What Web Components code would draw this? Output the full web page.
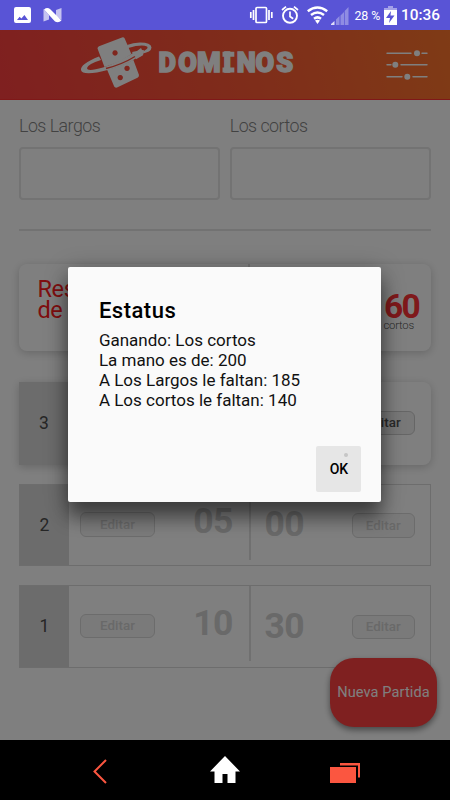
<!DOCTYPE html>
<html lang="es">
<head>
<meta charset="utf-8">
<title>Dominos</title>
<style>
html,body{margin:0;height:100%;overflow:hidden;background:#000}
body{font-family:Roboto,"Liberation Sans",sans-serif}
</style>
</head>
<body>
<dominos-app></dominos-app>
<script>
function define(name, html) {
  customElements.define(name, class extends HTMLElement {
    constructor() {
      super();
      const t = document.createElement('template');
      t.innerHTML = html;
      this.attachShadow({mode: 'open'}).appendChild(t.content.cloneNode(true));
    }
  });
}

define('status-bar', `<style>
:host{display:flex;height:30px;background:#5954d6;color:#fff;box-sizing:border-box;padding:0 10px 0 14px;align-items:center;justify-content:space-between}
div{display:flex;align-items:center}
svg{display:block}
.pct{font-size:12.400px;width:29.500px;margin-left:5px;white-space:nowrap;letter-spacing:-.1px}
.time{font-size:15.400px;font-weight:500;margin-left:4px;white-space:nowrap;line-height:30px}
</style>
<div>
<svg width="50" height="30" viewBox="0 0 50 30"><path fill="#fff" fill-rule="evenodd" d="M2 7h13q2 0 2 2v12q0 2-2 2H2q-2 0-2-2V9q0-2 2-2zM3 20h11l-3.600-5-3 3.600-1.800-1.800z"/><path fill="#fff" opacity=".65" d="M29.500 9v12.500l5.500-2V15zM47.500 8v12l-5.500-4V10z"/><path fill="#fff" d="M30 9.500Q33 7 36 9l11.500 11.500Q44.500 23.500 41 21.500z"/></svg>
</div>
<div>
<svg width="100" height="30" viewBox="249 0 100 30"><g fill="none" stroke="#fff" stroke-width="1.700"><rect x="256" y="7.500" width="10.500" height="15" rx="1"/><path d="M253.500 10v10M250.800 12v6M269 10v10M271.800 12v6"/><circle cx="290" cy="15.800" r="7" stroke-width="1.900"/><path d="M290 11.500v5l3.200 2.200M282 10l4-3.300M298 10l-4-3.300"/></g><g fill="none" stroke="#fff" stroke-width="2.500"><path d="M307.800 11.200Q317.500 3.700 327.200 11.200M311 15Q317.500 10 324 15M314 18.700Q317.500 16 321 18.700"/></g><path fill="#fff" d="M315 20.600Q317.500 19 320 20.600L317.500 24z"/><path fill="#fff" opacity=".33" d="M348.500 7v18h-3.800V11zM344 12v13h-3.500v-9.500zM339.500 16v9H336v-5.500z"/><path fill="#fff" d="M331 25v-1l3.500-3v4z" opacity=".8"/></svg>
<span class="pct">28 %</span>
<svg width="13" height="19" viewBox="0 0 13 19"><path fill="#fff" opacity=".45" d="M4 0h5v2h4v2H0V2h4z"/><path fill="#fff" fill-rule="evenodd" d="M0 4h13v15H0zM7 5l-5 7h4l-1 5 5.500-7.500H6.500z"/></svg>
<span class="time">10:36</span>
</div>`);

define('app-header', `<style>
:host{display:flex;height:70px;box-sizing:border-box;background:linear-gradient(75deg,#ff4040 0%,#ff5636 48%,#ff762c 100%);border-bottom:1px solid #ff3030;padding:0 22px 0 80px;justify-content:space-between}
svg{display:block}
text{font:900 27px Roboto,sans-serif;fill:#fff;stroke:#fff;stroke-width:1.500px;stroke-linejoin:miter}
</style>
<svg width="216" height="69" viewBox="80 30 216 69">
<g fill="#fff"><path fill-rule="evenodd" d="M151.500 47.500Q151 42.500 140 42.500Q133 42.700 127 45L128 48Q142 44 147 46.500Q149 48 144 51L141 54Q151.500 52 151.500 47.500zM99 56.500Q80 64 81 70Q82 75 97 72.500Q124 67 137 57.500L141 56L144 51L140 50.500L133 53Q119 62 103 67.500Q87 72 87 68Q88 64 101 60z"/>
<path fill-rule="evenodd" d="M97.500 48.500Q97.500 47 99 46.300L122 37.400Q124 37 124.700 38.500L131.300 54Q123 61 104.500 67zM115 50.300a2.700 2.700 0 1 0 .1 0z"/>
<path fill-rule="evenodd" d="M107 69.500Q122 66 133.300 59.700L139 75Q139 77 137.500 77.700L117 87.500Q115 88 114.200 86.500zM127 65.700a2.700 2.700 0 1 0 .1 0zM120.200 74.900a2.700 2.700 0 1 0 .1 0z"/>
<path d="M132 52l5-1 4-3 1 2 2 .3-1 5-7 4z"/></g><path d="M106 68.500Q122 64.500 135 56.500" fill="none" stroke="#ff4e3b" stroke-width="1.300"/>
<text y="71.700" x="158.500 178.300 197 223.300 236.700 255.500 276.200">DOMINOS</text>
<path d="M222.500 51.700h11.800v5h-11.800zM222.500 67.500h11.800v5h-11.800z" fill="#fff"/>
</svg>
<svg width="42" height="69" viewBox="386 30 42 69"><g stroke="#fff" stroke-width="1.400" stroke-linecap="round"><path d="M387 53.300h24M422 53.300h5M387 64.700h4M401 64.700h26M387 76.700h15M413 76.700h14"/></g><g fill="#fff"><circle cx="417" cy="53.300" r="3"/><circle cx="395.300" cy="64.700" r="3"/><circle cx="407.300" cy="76.700" r="3"/></g></svg>`);

define('score-field', `<style>
:host{display:block;flex:1}
label{display:block;font-size:17.800px;font-weight:300;line-height:20px;height:30.500px;color:#848484;letter-spacing:-.5px}
input{display:block;box-sizing:border-box;width:100%;height:53px;border:2px solid #e6e6e6;border-radius:4px;background:#fff;outline:0}
</style><label><slot></slot></label><input>`);

define('edit-button', `<style>
:host{display:flex;box-sizing:border-box;height:24.500px;border:1px solid #d8d8d8;border-radius:6px;background:#f5f5f5;color:#d2d2d2;align-items:center;justify-content:center;font-size:13.400px;font-weight:500}
:host([active]){color:#555;border-color:#ccc;background:#f0f0f0}
</style><slot></slot>`);

define('summary-card', `<style>
:host{display:grid;grid-template-columns:229px 2px 1fr;height:87px;border-radius:8px;background:#fff;box-shadow:0 2px 10px rgba(0,0,0,.2)}
.title{color:#ff1c20;font-size:23.500px;font-weight:400;line-height:20.500px;padding:15px 0 0 18.500px;letter-spacing:-.4px}
i{background:#e0e0e0;height:78px}
.score{text-align:right;padding:24.500px 12px 0 0;color:#ff3236;font-size:33.500px;font-weight:700;line-height:36px;letter-spacing:-1.700px}
small{display:block;font-size:11.300px;font-weight:300;line-height:12px;margin-top:-5px;color:#555;letter-spacing:-.2px;padding-right:5px}
</style>
<div class="title">Resumen<br>de</div><i></i><div class="score">60<small>cortos</small></div>`);

define('round-row', `<style>
:host{display:grid;grid-template-columns:49px 180px 2px 1fr;box-sizing:border-box;height:82.500px;border:1px solid #dadada;background:#fff}
:host([active]){border:0;border-radius:0 8px 8px 0;box-shadow:0 2px 10px rgba(0,0,0,.2);grid-template-columns:50px 180px 2px 1fr}
.n{background:#d8d8d8;display:flex;align-items:center;justify-content:center;font-size:17.500px;color:#4c4c4c}
.cell{display:flex;justify-content:space-between;box-sizing:border-box;color:#d2d2d2}
.l{padding:27.500px 17px 0 11px}.r{padding:28.500px 15.500px 0 13.500px}
:host([active]) .r{padding-right:16.500px}
i{background:#e0e0e0;height:75px}
.v{font-size:35.500px;line-height:36px;font-weight:700;letter-spacing:-.5px}
.l .v{margin-top:-9px}.r .v{margin-top:-7px}
.l .v{margin-right:-1px}
</style>
<div class="n"><slot name="n"></slot></div>
<div class="cell l"><slot name="le"></slot><span class="v"><slot name="a"></slot></span></div><i></i>
<div class="cell r"><span class="v"><slot name="b"></slot></span><slot name="re"></slot></div>`);

define('nueva-button', `<style>
:host{display:flex;align-items:center;justify-content:center;box-sizing:border-box;width:107px;height:69.500px;border-radius:24px;background:#ff4040;color:#fff;font-size:14.600px;letter-spacing:.08px;white-space:nowrap;box-shadow:0 3px 6px rgba(0,0,0,.45)}
</style><slot></slot>`);

define('status-dialog', `<style>
:host{display:flex;flex-direction:column;box-sizing:border-box;width:313px;height:235px;border-radius:2px;background:#fafafa;padding:29px 20px 10.500px 30.500px;color:#000;box-shadow:0 16px 18px rgba(0,0,0,.4),0 4px 24px rgba(0,0,0,.3)}
h2{margin:0;font-size:22px;font-weight:500;line-height:30px;letter-spacing:.5px}
p{margin:4px 0 0;font-size:17px;line-height:20px;color:#111;white-space:nowrap}
button{position:relative;margin:auto 0 0 auto;width:45px;height:46px;border:0;border-radius:2px;background:#e6e6e6;font:500 14px Roboto,sans-serif;color:#000;padding:0}
button::after{content:"";position:absolute;left:28px;top:7px;width:4px;height:4px;border-radius:50%;background:#c6c6c6}
</style>
<h2>Estatus</h2>
<p>Ganando: Los cortos<br>La mano es de: 200<br>A Los Largos le faltan: 185<br>A Los cortos le faltan: 140</p>
<button>OK</button>`);

define('nav-bar', `<style>
:host{display:flex;height:60px;background:#000;justify-content:space-between;padding:0 90px 0 91px;align-items:center}
svg{display:block}
</style>
<svg width="18" height="60"><path d="M15 20L3.500 31.500 15 43" fill="none" stroke="#fb5640" stroke-width="2"/></svg>
<svg width="32" height="60" style="margin-left:10px"><path fill="#fff" d="M16 16L1 31.500h4.500V43h8v-9h5v9h8V31.500H31z"/></svg>
<svg width="30" height="60"><path fill="#fb5640" d="M0 27h26v16H0zM10 23h20v14.500h-2V25.500H10z"/></svg>`);

define('dominos-app', `<style>
:host{display:flex;flex-direction:column;position:relative;width:450px;height:800px;overflow:hidden;background:#fff}
main{height:640px;box-sizing:border-box;padding:16px 19px 0;overflow:hidden}
.fields{display:flex;gap:9.500px}
hr{border:0;height:2px;background:#e4e4e4;margin:29.500px 0 33px}
.rows{display:flex;flex-direction:column;gap:19px;margin-top:31px}
.l{width:75px}.r{width:62.500px}
.scrim{position:absolute;left:0;top:30px;width:450px;height:710px;background:rgba(0,0,0,.5)}
nueva-button{position:absolute;left:330px;top:657.500px}
status-dialog{position:absolute;left:68.400px;top:267.400px}
</style>
<status-bar></status-bar>
<app-header></app-header>
<main>
<div class="fields"><score-field>Los Largos</score-field><score-field>Los cortos</score-field></div>
<hr>
<summary-card></summary-card>
<div class="rows">
<round-row active><span slot="n">3</span><edit-button class="l" active slot="le">Editar</edit-button><span slot="a">00</span><span slot="b">30</span><edit-button class="r" active slot="re">Editar</edit-button></round-row>
<round-row><span slot="n">2</span><edit-button class="l" slot="le">Editar</edit-button><span slot="a">05</span><span slot="b">00</span><edit-button class="r" slot="re">Editar</edit-button></round-row>
<round-row><span slot="n">1</span><edit-button class="l" slot="le">Editar</edit-button><span slot="a">10</span><span slot="b">30</span><edit-button class="r" slot="re">Editar</edit-button></round-row>
</div>
</main>
<nueva-button>Nueva Partida</nueva-button>
<div class="scrim"></div>
<status-dialog></status-dialog>
<nav-bar></nav-bar>`);
</script>
</body>
</html>
